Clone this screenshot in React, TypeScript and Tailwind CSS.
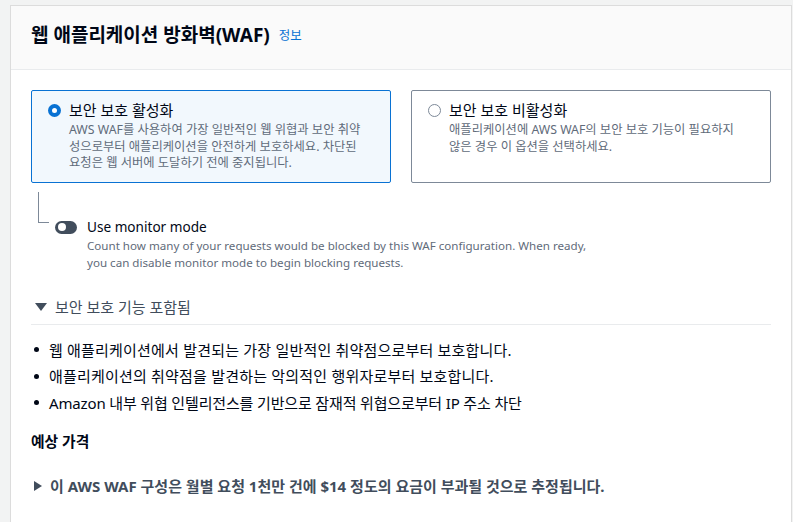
import React from "react";

const FONT = { fontFamily: '"Noto Sans", "Noto Sans CJK KR", sans-serif' };

const bullets = [
  { text: "웹 애플리케이션에서 발견되는 가장 일반적인 취약점으로부터 보호합니다.", track: "tracking-[0.2px]" },
  { text: "애플리케이션의 취약점을 발견하는 악의적인 행위자로부터 보호합니다.", track: "tracking-[0.2px]" },
  { text: "Amazon 내부 위협 인텔리전스를 기반으로 잠재적 위협으로부터 IP 주소 차단", track: "tracking-[-0.15px]" },
];

const RadioCard = ({
  selected,
  title,
  lines,
}: {
  selected: boolean;
  title: string;
  lines: string[];
}) => (
  <div
    className={
      "rounded-[2px] border pl-4 pr-3 pt-[9px] pb-[10px] " +
      (selected ? "border-[#0972d3] bg-[#f2f8fd]" : "border-[#7d8998] bg-white")
    }
  >
    <div className="flex items-center gap-[8px] text-[15px] leading-5 text-[#000716]">
      {selected ? (
        <span className="flex h-[13px] w-[13px] shrink-0 items-center justify-center rounded-full bg-[#0972d3]">
          <span className="h-[5px] w-[5px] rounded-full bg-white" />
        </span>
      ) : (
        <span className="h-[13px] w-[13px] shrink-0 rounded-full border-[1.5px] border-[#7d8998] bg-white" />
      )}
      <span>{title}</span>
    </div>
    <div className="mt-[2px] pl-[21px] text-[12.3px] leading-[16.5px] text-[#5f6b7a]">
      {lines.map((l) => (
        <div key={l} className="whitespace-nowrap">
          {l}
        </div>
      ))}
    </div>
  </div>
);

export default function App() {
  return (
    <div className="min-h-[522px] bg-[#f2f3f3] pl-[10px] pr-[1px] pt-[5px]" style={FONT}>
      <div className="min-h-[517px] border border-b-0 border-[#dcdcdc] bg-white">
        <div className="flex h-[64px] items-center border-b border-[#e9ebed] bg-[#fafafa] px-5 pb-[5px]">
          <h1 className="text-[19px] font-bold text-[#000716]">웹 애플리케이션 방화벽(WAF)</h1>
          <a className="ml-[9px] mt-[2px] text-[12.5px] text-[#0972d3]">정보</a>
        </div>

        <div className="px-5 pt-5">
          <div className="grid grid-cols-2 gap-5">
            <RadioCard
              selected
              title="보안 보호 활성화"
              lines={[
                "AWS WAF를 사용하여 가장 일반적인 웹 위협과 보안 취약",
                "성으로부터 애플리케이션을 안전하게 보호하세요. 차단된",
                "요청은 웹 서버에 도달하기 전에 중지됩니다.",
              ]}
            />
            <RadioCard
              selected={false}
              title="보안 보호 비활성화"
              lines={[
                "애플리케이션에 AWS WAF의 보안 보호 기능이 필요하지",
                "않은 경우 이 옵션을 선택하세요.",
              ]}
            />
          </div>

          <div className="mt-[9px] flex pl-[7px]">
            <div className="h-[31px] w-[11px] shrink-0 border-b border-l border-[#7d8998]" />
            <div className="ml-[6px] mt-[25px] flex gap-[10px]">
              <span className="mt-[4px] flex h-[13px] w-[22px] shrink-0 items-center rounded-full bg-[#414d5c] pl-[3px]">
                <span className="h-[8px] w-[8px] rounded-full bg-white" />
              </span>
              <div>
                <div className="text-[13.6px] leading-5 text-[#000716]">Use monitor mode</div>
                <p className="text-[11.6px] leading-[17px] text-[#5f6b7a]">
                  Count how many of your requests would be blocked by this WAF configuration. When ready,
                  <br />
                  you can disable monitor mode to begin blocking requests.
                </p>
              </div>
            </div>
          </div>

          <div className="mt-[26px] flex items-center border-b border-[#e9ebed] pb-[7px] text-[15px] leading-5 text-[#414d5c]">
            <svg width="12" height="10" viewBox="0 0 12 10" className="ml-[4px]">
              <path d="M0 1 H12 L6 9 Z" fill="#414d5c" />
            </svg>
            <span className="ml-[8px]">보안 보호 기능 포함됨</span>
          </div>

          <ul className="mt-[15px] flex flex-col gap-[6.5px]">
            {bullets.map((b) => (
              <li key={b.text} className={"flex items-center text-[15px] leading-5 text-[#000716] " + b.track}>
                <span className="ml-[3px] h-[5px] w-[5px] shrink-0 rounded-full bg-[#000716]" />
                <span className="ml-[10px]">{b.text}</span>
              </li>
            ))}
          </ul>

          <div className="mt-[18px] text-[14.8px] font-bold leading-5 text-[#000716]">예상 가격</div>

          <div className="mt-[25px] flex items-center text-[15px] font-bold leading-5 text-[#414d5c]">
            <svg width="9" height="12" viewBox="0 0 9 12" className="ml-[3px]">
              <path d="M0 1 L8 6 L0 11 Z" fill="#414d5c" />
            </svg>
            <span className="ml-[7px]">
              이 AWS WAF 구성은 월별 요청 1천만 건에 $14 정도의 요금이 부과될 것으로 추정됩니다.
            </span>
          </div>
        </div>
      </div>
    </div>
  );
}
